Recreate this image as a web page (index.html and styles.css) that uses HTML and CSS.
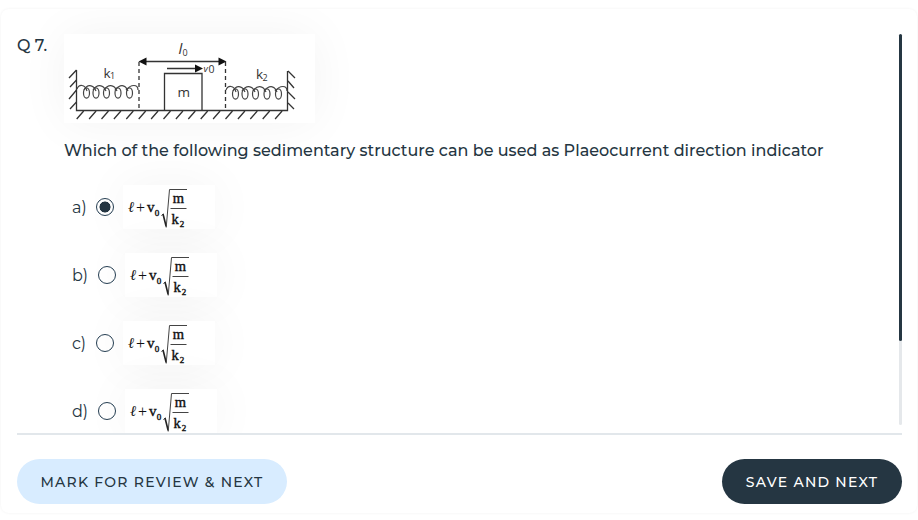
FILE: index.html
```
<!DOCTYPE html>
<html lang="en">
<head>
<meta charset="utf-8">
<title>Question 7</title>
<link rel="stylesheet" href="styles.css">
</head>
<body>
<svg class="defs" width="0" height="0" aria-hidden="true">
  <defs>
    <g id="formula">
      <g class="math">
        <text x="5" y="27" font-size="15" font-style="italic">ℓ</text>
        <text x="13" y="28" font-size="16">+</text>
        <text class="heavy" x="24" y="27.300" font-size="15">v</text>
        <text class="heavy" x="31.700" y="30.800" font-size="9">0</text>
        <text class="heavy" x="49.800" y="18" font-size="14.500">m</text>
        <text class="heavy" x="48.500" y="38.500" font-size="14.500">k</text>
        <text class="heavy" x="56.800" y="42" font-size="9">2</text>
      </g>
      <path d="M38.500 30.500l2-1.500" fill="none" stroke="#222" stroke-width="1"/>
      <path d="M40 29l3.200 12.500" fill="none" stroke="#222" stroke-width="1.600"/>
      <path d="M43.200 42.500L46.500 4.500H64M47.500 23.500H63.500" fill="none" stroke="#444" stroke-width="1"/>
    </g>
    <g id="spring" fill="none" stroke="#444" stroke-width="1.200">
      <path d="M0 4C2-1 8-1 10 6M7 5C10-1 16-1 19 6M16 5C20-1 26-1 29 6M27 5C31-1 37-1 40 6M38 5C43-1 48-1 51 6M49 5C54-1 61-1 61 5"/>
      <ellipse cx="9.500" cy="8" rx="3" ry="5.200"/>
      <ellipse cx="19" cy="8" rx="3" ry="5.200"/>
      <ellipse cx="29.500" cy="8" rx="3" ry="5.200"/>
      <ellipse cx="41" cy="8" rx="3" ry="5.200"/>
      <ellipse cx="52.500" cy="8" rx="3" ry="5.200"/>
    </g>
  </defs>
</svg>
<main class="card">
  <section class="question">
    <div class="number">Q 7.</div>
    <div class="content">
      <svg class="figure" width="251" height="89" viewBox="64 34 251 89">
        <g fill="none" stroke="#333" stroke-width="1.300">
          <path d="M76.500 70V110.500H287.500V71"/>
          <path d="M164.500 110V73.500H202V110"/>
          <path d="M69 78l7.500-8M70 87l6.500-7M69 99l7.500-9M70 109l6.500-7M288 71l7 7M288 81l6 7M288 92l7 7M288 103l6 6"/>
          <path d="M76.700 119l7-8m5.400 8l7-8m5.400 8l7-8m5.400 8l7-8m5.400 8l7-8m5.400 8l7-8m5.400 8l7-8m5.400 8l7-8m5.400 8l7-8m5.400 8l7-8m5.400 8l7-8m5.400 8l7-8m5.400 8l7-8m5.400 8l7-8m5.400 8l7-8m5.400 8l7-8m5.400 8l7-8"/>
          <path d="M139 62V108M225.500 62V108" stroke-dasharray="4 3"/>
          <path d="M142 61.500H222M167 68.500H197" stroke-width="1.600"/>
        </g>
        <path d="M138.500 61.500l8-4v8zM226.500 61.500l-8-4v8zM203 68.500l-8-4v8z" fill="#111"/>
        <use href="#spring" x="77" y="85"/>
        <use href="#spring" x="226" y="86"/>
        <g class="figure-label">
          <text x="178.500" y="54" font-size="15" font-style="italic">l</text>
          <text x="182.500" y="55.500" font-size="9">0</text>
          <text x="203.500" y="71.500" font-size="9.500" font-style="italic">v</text>
          <text x="208.500" y="72.500" font-size="10.500">0</text>
          <text x="103.500" y="77.500" font-size="13.500">k</text>
          <text x="110" y="79" font-size="9">1</text>
          <text x="256" y="79" font-size="13.500">k</text>
          <text x="262.500" y="80.500" font-size="9">2</text>
          <text x="177.500" y="97" font-size="13.500">m</text>
        </g>
      </svg>
      <p class="prompt">Which of the following sedimentary structure can be used as Plaeocurrent direction indicator</p>
      <div class="options">
        <label class="option narrow"><span class="letter">a)</span><span class="radio selected"></span><svg class="answer" width="92" height="44"><use href="#formula"/></svg></label>
        <label class="option"><span class="letter">b)</span><span class="radio"></span><svg class="answer" width="92" height="44"><use href="#formula"/></svg></label>
        <label class="option narrow"><span class="letter">c)</span><span class="radio"></span><svg class="answer" width="92" height="44"><use href="#formula"/></svg></label>
        <label class="option"><span class="letter">d)</span><span class="radio"></span><svg class="answer" width="92" height="44"><use href="#formula"/></svg></label>
      </div>
    </div>
    <div class="scrollbar"><div class="thumb"></div></div>
  </section>
  <footer class="actions">
    <button class="button review">MARK FOR REVIEW &amp; NEXT</button>
    <button class="button save">SAVE AND NEXT</button>
  </footer>
</main>
</body>
</html>
```
FILE: styles.css
```
* {
  box-sizing: border-box;
}

body {
  margin: 0;
  height: 520px;
  padding: 9px 1px 7px;
  overflow: hidden;
  background: #fff;
  color: #253642;
  font-family: Montserrat, Inter, sans-serif;
  font-weight: 500;
}

.defs {
  display: block;
}

.card {
  height: 504px;
  border-radius: 8px;
  background: #fff;
  box-shadow: 0 0 3px rgba(0, 0, 0, 0.06);
}

.question {
  display: flex;
  height: 424px;
  padding-top: 25px;
  overflow: hidden;
}

.number {
  width: 63px;
  padding-left: 16px;
  font-size: 16px;
  line-height: 23px;
}

.content {
  flex: 1;
}

.figure,
.answer {
  display: block;
  background: #fff;
  box-shadow: 0 0 50px rgba(0, 0, 0, 0.05);
}

.figure-label {
  fill: #333;
  font-family: "Open Sans", sans-serif;
}

.prompt {
  margin: 17px 0 24px;
  font-size: 16px;
  line-height: 21px;
  letter-spacing: 0.01px;
  white-space: nowrap;
}

.options {
  display: flex;
  flex-direction: column;
  gap: 24px;
  padding-left: 8px;
}

.option {
  display: flex;
  align-items: center;
  height: 44px;
}

.letter {
  width: 26px;
  font-size: 16px;
  font-weight: 400;
}

.narrow .letter {
  width: 24px;
}

.radio {
  width: 18px;
  height: 18px;
  margin-right: 9px;
  border: 1px solid #253e52;
  border-radius: 50%;
}

.selected {
  background: radial-gradient(circle, #253642 5.2px, #fff 5.8px);
}

.math {
  fill: #111;
  font-family: "Liberation Serif", serif;
  font-weight: 400;
}

.heavy {
  stroke: #111;
  stroke-width: 0.4px;
}

.scrollbar {
  width: 3px;
  height: 391px;
  margin-right: 15px;
  border-radius: 2px;
  background: #e5e8eb;
}

.thumb {
  height: 307px;
  border-radius: 2px;
  background: #253642;
}

.actions {
  display: flex;
  justify-content: space-between;
  margin: 0 15px 0 16px;
  padding-top: 24px;
  border-top: 2px solid #e2e7eb;
}

.button {
  height: 45px;
  padding: 0;
  border: 0;
  border-radius: 23px;
  font: 500 14px Montserrat, Inter, sans-serif;
  letter-spacing: 1.25px;
  white-space: nowrap;
}

.review {
  width: 270px;
  background: #d8ecff;
  color: #253642;
}

.save {
  width: 180px;
  background: #253642;
  color: #fff;
}
```
